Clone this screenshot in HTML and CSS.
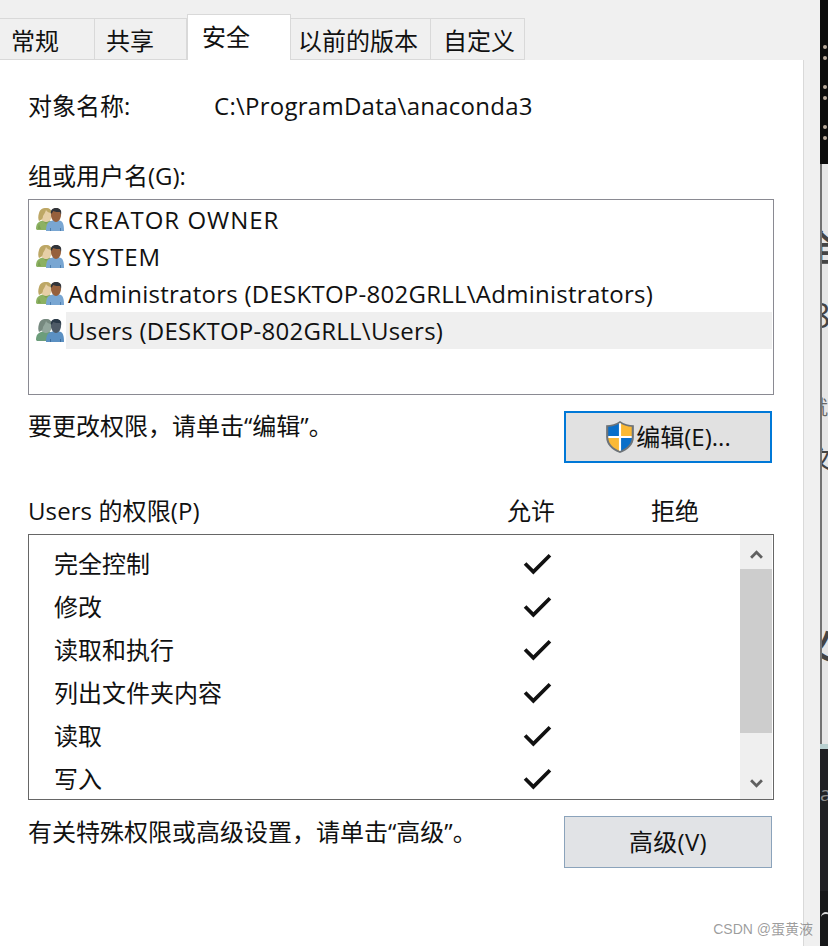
FILE: index.html
```html
<!DOCTYPE html>
<html lang="zh">
<head>
<meta charset="utf-8">
<title>安全</title>
<link rel="stylesheet" href="styles.css">
</head>
<body>
<svg class="defs" width="0" height="0" aria-hidden="true">
  <defs>
    <symbol id="users" viewBox="0 0 28 23">
      <path d="M0 21c0-5 2-7 5-8l3-1h5l3 2 2 8H1z" fill="#8cb162"/>
      <path d="M3 16c-1 2-1 4-1 5h3zM7 13l3 3 3-3z" fill="#6f9648" opacity=".6"/>
      <path d="M4 7c0-5 3-7 6-7 4 0 6 3 6 7 0 3-2 7-6 7s-6-4-6-7z" fill="#e6cfa6"/>
      <path d="M3 13c-1-2-1-5 0-8 1-4 4-5 7-5s5 1 6 5c-3 0-5-1-6-3-1 3-2 4-3 6 0 2-1 4-4 5z" fill="#bda765"/>
      <path d="M10 23c0-7 2-9 5-10l3-1h4l3 1c2 1 3 4 3 10z" fill="#79a6d2"/>
      <path d="M14 20h1v3h-1zM24 20h1v3h-1z" fill="#4d7eaf"/>
      <path d="M15 7c0-5 2-7 5-7s5 2 5 7c0 3-2 7-5 7s-5-4-5-7z" fill="#96603c"/>
      <path d="M15 6c-1-4 2-6 5-6 4 0 6 2 5 7l-1-3c-2 0-5 0-7-1 0 1-1 2-2 3z" fill="#30343a"/>
    </symbol>
    <symbol id="users-dim" viewBox="0 0 28 23">
      <path d="M0 21c0-5 2-7 5-8l3-1h5l3 2 2 8H1z" fill="#6c9d7b"/>
      <path d="M4 7c0-5 3-7 6-7 4 0 6 3 6 7 0 3-2 7-6 7s-6-4-6-7z" fill="#93a79d"/>
      <path d="M3 13c-1-2-1-5 0-8 1-4 4-5 7-5s5 1 6 5c-3 0-5-1-6-3-1 3-2 4-3 6 0 2-1 4-4 5z" fill="#76897f"/>
      <path d="M10 23c0-7 2-9 5-10l3-1h4l3 1c2 1 3 4 3 10z" fill="#5b90c2"/>
      <path d="M14 20h1v3h-1zM24 20h1v3h-1z" fill="#3c6d9e"/>
      <path d="M15 7c0-5 2-7 5-7s5 2 5 7c0 3-2 7-5 7s-5-4-5-7z" fill="#4e5b67"/>
      <path d="M15 6c-1-4 2-6 5-6 4 0 6 2 5 7l-1-3c-2 0-5 0-7-1 0 1-1 2-2 3z" fill="#2a3a48"/>
    </symbol>
    <symbol id="check" viewBox="0 0 28 22">
      <path d="M2 11l8 8L26 3" fill="none" stroke="#111" stroke-width="3.600"/>
    </symbol>
  </defs>
</svg>
<div class="page">
  <div class="dialog">
    <div class="tabs">
      <div class="tab tab-a">常规</div>
      <div class="tab tab-b">共享</div>
      <div class="tab tab-c tab-active">安全</div>
      <div class="tab tab-d">以前的版本</div>
      <div class="tab tab-e">自定义</div>
    </div>
    <div class="panel">
      <div class="object-row">
        <span class="object-label">对象名称:</span>
        <span class="latin">C:\ProgramData\anaconda3</span>
      </div>
      <div class="group-label">组或用户名(G):</div>
      <div class="listbox">
        <div class="user"><svg class="user-icon"><use href="#users"/></svg><span class="user-name caps-a">CREATOR OWNER</span></div>
        <div class="user"><svg class="user-icon"><use href="#users"/></svg><span class="user-name caps-b">SYSTEM</span></div>
        <div class="user"><svg class="user-icon"><use href="#users"/></svg><span class="user-name latin">Administrators (DESKTOP-802GRLL\Administrators)</span></div>
        <div class="user"><svg class="user-icon"><use href="#users-dim"/></svg><span class="user-name latin user-selected">Users (DESKTOP-802GRLL\Users)</span></div>
      </div>
      <div class="action-row action-edit">
        <span class="action-text">要更改权限，请单击“编辑”。</span>
        <button class="btn btn-focus">
          <svg class="shield" viewBox="0 0 28 30">
            <path d="M14 0c4 3 8 4 13 4v11c0 7-5 12-13 15C6 27 1 22 1 15V4c5 0 9-1 13-4z" fill="#6e7479"/>
            <path d="M14 2c4 2 7 3 11 3.500V14H14z" fill="#fbb935"/>
            <path d="M14 2v12H3V5.500C7 5 10 4 14 2z" fill="#0a6fc9"/>
            <path d="M3 16h11v12C8 26 3.500 22 3 16z" fill="#fbb935"/>
            <path d="M14 16h11c-.500 6-5 10-11 12z" fill="#0a6fc9"/>
            <path d="M13 2h2v26h-2zM3 14h22v2H3z" fill="#fff"/>
          </svg>编辑(E)...
        </button>
      </div>
      <div class="perm-head">
        <span class="perm-title">Users 的权限(P)</span>
        <span class="perm-allow">允许</span>
        <span class="perm-deny">拒绝</span>
      </div>
      <div class="permbox">
        <div class="perm-rows">
          <div class="perm"><span class="perm-name">完全控制</span><svg class="check"><use href="#check"/></svg></div>
          <div class="perm"><span class="perm-name">修改</span><svg class="check"><use href="#check"/></svg></div>
          <div class="perm"><span class="perm-name">读取和执行</span><svg class="check"><use href="#check"/></svg></div>
          <div class="perm"><span class="perm-name">列出文件夹内容</span><svg class="check"><use href="#check"/></svg></div>
          <div class="perm"><span class="perm-name">读取</span><svg class="check"><use href="#check"/></svg></div>
          <div class="perm"><span class="perm-name">写入</span><svg class="check"><use href="#check"/></svg></div>
        </div>
        <div class="scrollbar">
          <div class="scroll-btn"><svg class="chev" viewBox="0 0 12 8"><path d="M1 7l5-5 5 5" fill="none" stroke="#606060" stroke-width="2.600"/></svg></div>
          <div class="scroll-thumb"></div>
          <div class="scroll-btn scroll-down"><svg class="chev" viewBox="0 0 12 8"><path d="M1 1l5 5 5-5" fill="none" stroke="#606060" stroke-width="2.600"/></svg></div>
        </div>
      </div>
      <div class="action-row action-adv">
        <span class="action-text">有关特殊权限或高级设置，请单击“高级”。</span>
        <button class="btn btn-plain">高级(V)</button>
      </div>
    </div>
  </div>
  <div class="strip">
    <div class="strip-black">
      <i class="dot"></i><i class="dot dot-2"></i><i class="dot dot-3"></i><i class="dot dot-2"></i><i class="dot dot-3"></i><i class="dot dot-2"></i>
    </div>
    <div class="strip-light">
      <span class="frag frag-1">全</span>
      <span class="frag frag-2">8</span>
      <span class="frag frag-3">就</span>
      <span class="frag frag-4">文</span>
      <span class="frag frag-5">义</span>
    </div>
    <div class="strip-dark"><span class="frag-a">a</span></div>
    <div class="strip-darker"><i class="arc"></i></div>
  </div>
  <div class="watermark">CSDN @蛋黄液</div>
</div>
</body>
</html>
```
FILE: styles.css
```css
* { box-sizing: border-box; }
html, body { margin: 0; padding: 0; }
body {
  width: 828px;
  height: 946px;
  overflow: hidden;
  background: #f0f0f0;
  color: #111;
  font-family: "Open Sans", "Noto Sans CJK SC", sans-serif;
  font-size: 24px;
  line-height: 32px;
}
.defs { position: absolute; }
.page { position: relative; display: flex; width: 828px; height: 946px; }
.dialog { width: 820px; background: #f0f0f0; padding-top: 14px; }

.tabs { display: flex; align-items: flex-end; height: 46px; width: 804px; }
.tab {
  height: 42px;
  border: 1px solid #d9d9d9;
  border-left: 0;
  display: flex;
  align-items: center;
  padding-top: 4px;
  white-space: nowrap;
}
.tab-a { width: 95px; padding-left: 11px; }
.tab-b { width: 92px; padding-left: 11px; }
.tab-c { width: 104px; padding-left: 14px; }
.tab-d { width: 140px; padding-left: 7px; }
.tab-e { width: 94px; padding-left: 12px; }
.tab-active {
  height: 46px;
  background: #fff;
  border-left: 1px solid #d9d9d9;
  border-bottom: 0;
  padding-top: 0;
  padding-bottom: 1px;
}

.panel {
  width: 804px;
  height: 886px;
  background: #fff;
  border-right: 1px solid #d9d9d9;
  padding: 29px 0 0 28px;
}
.latin { letter-spacing: .26px; }
.caps-a { letter-spacing: 1px; }
.caps-b { letter-spacing: .85px; }
.object-row { display: flex; height: 34px; align-items: center; }
.object-label { width: 186px; }
.group-label { margin-top: 36px; height: 34px; display: flex; align-items: center; }
.listbox {
  width: 746px;
  height: 196px;
  margin-top: 6px;
  border: 1px solid #8a8a92;
  padding: 1px 1px 0 7px;
}
.user { display: flex; align-items: center; height: 37px; }
.user-icon { width: 28px; height: 23px; flex: none; margin-right: 2px; }
.user-name { flex: 1; height: 37px; line-height: 38px; padding-left: 2px; white-space: nowrap; }
.user-selected { background: #efefef; }

.action-row { display: flex; width: 744px; justify-content: space-between; }
.action-edit { margin-top: 16px; height: 52px; }
.action-adv { margin-top: 16px; height: 52px; }
.action-text { line-height: 32px; }
.action-edit .action-text { margin-top: -1px; }
.btn {
  width: 208px;
  height: 52px;
  font: inherit;
  color: #111;
  padding: 0;
  display: flex;
  align-items: center;
  justify-content: center;
}
.btn-focus { border: 2px solid #0078d7; background: #e1e1e1; }
.btn-plain { border: 1px solid #8ba3bb; background: #e1e3e6; letter-spacing: .3px; }
.shield { width: 30px; height: 32px; margin-right: 1px; }

.perm-head { display: flex; margin-top: 31px; height: 34px; align-items: center; }
.perm-title { width: 479px; letter-spacing: .1px; }
.perm-allow { width: 144px; }

.permbox {
  display: flex;
  width: 746px;
  height: 266px;
  margin-top: 6px;
  border: 1px solid #666;
  padding-right: 1px;
}
.perm-rows { flex: 1; padding: 7px 0 0 25px; overflow: hidden; }
.perm { display: flex; align-items: center; height: 43px; }
.perm-name { width: 469px; }
.check { width: 29px; height: 23px; }
.scrollbar { width: 32px; display: flex; flex-direction: column; background: #efefef; }
.scroll-btn { height: 34px; display: flex; align-items: center; justify-content: center; flex: none; padding-top: 5px; }
.scroll-down { margin-top: auto; height: 64px; align-items: flex-end; padding: 0 0 11px; }
.chev { width: 13px; height: 9px; }
.scroll-thumb { height: 164px; background: #cdcdcd; flex: none; }

.strip { width: 8px; display: flex; flex-direction: column; overflow: hidden; }
.strip-black { height: 164px; background: #0b0b0b; padding-top: 45px; display: flex; flex-direction: column; }
.dot { width: 4px; height: 4px; border-radius: 50%; background: #b9a99a; margin: 0 0 7px 3px; flex: none; }
.dot-3 { margin-top: 18px; }
.strip-light {
  position: relative;
  height: 580px;
  background: #e6e6e6;
  border-left: 2px solid #737373;
  overflow: hidden;
  color: #444;
}
.frag { position: absolute; line-height: 1; font-weight: 700; }
.frag-1 { left: -20px; top: 66px; font-size: 36px; }
.frag-2 { left: -11px; top: 134px; font-size: 34px; font-weight: 400; }
.frag-3 { left: -14px; top: 234px; font-size: 20px; font-weight: 400; color: #666; }
.frag-4 { left: -14px; top: 282px; font-size: 26px; font-weight: 400; }
.frag-5 { left: -24px; top: 464px; font-size: 36px; }
.strip-dark { height: 147px; background: #202124; color: #8a8a8a; border-top: 5px solid #b9d0d0; font-size: 20px; line-height: 24px; padding-top: 33px; white-space: nowrap; }
.strip-darker { position: relative; flex: 1; background: #17181a; }
.arc { position: absolute; left: 1px; top: 21px; width: 10px; height: 10px; border-top: 2px solid #ddd; border-radius: 50%; }
.watermark {
  position: absolute;
  right: 15px;
  top: 919px;
  font-family: "Liberation Sans", "Noto Sans CJK SC", sans-serif;
  font-size: 14px;
  line-height: 20px;
  color: rgba(90, 90, 90, .6);
  white-space: nowrap;
}
```
